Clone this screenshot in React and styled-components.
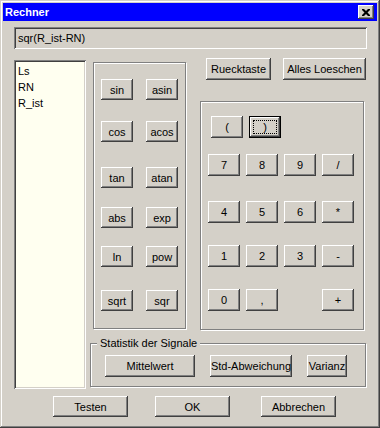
import React from 'react';
import styled, { createGlobalStyle } from 'styled-components';

const face = '#d4d0c8';

const GlobalStyle = createGlobalStyle`
    html, body {
        margin: 0;
        padding: 0;
        background: ${face};
    }
    body {
        font-family: "Liberation Sans", Arial, sans-serif;
        font-size: 11px;
        color: #000;
    }
`;

const raised = `
    inset -1px -1px #404040,
    inset 1px 1px #ffffff,
    inset -2px -2px #808080,
    inset 2px 2px ${face}
`;

const sunken = `
    inset 1px 1px #808080,
    inset -1px -1px #ffffff,
    inset 2px 2px #404040,
    inset -2px -2px ${face}
`;

const Window = styled.div`
    width: 380px;
    height: 428px;
    box-sizing: border-box;
    padding: 3px;
    background: ${face};
    box-shadow: inset -1px -1px #404040, inset 1px 1px ${face}, inset -2px -2px #808080, inset 2px 2px #ffffff;
    display: flex;
    flex-direction: column;
`;

const TitleBar = styled.div`
    height: 18px;
    background: #0000ff;
    display: flex;
    align-items: center;
    justify-content: space-between;
    padding: 0 3px 0 2px;
`;

const Title = styled.span`
    color: #fff;
    font-weight: bold;
    font-size: 11px;
`;

const CloseButton = styled.div`
    width: 16px;
    height: 14px;
    background: ${face};
    box-shadow: ${raised};
    display: flex;
    align-items: center;
    justify-content: center;
`;

const Body = styled.div`
    padding: 6px 10px 0 11px;
    display: flex;
    flex-direction: column;
`;

const ExprField = styled.div`
    height: 22px;
    box-sizing: border-box;
    padding: 0 4px;
    display: flex;
    align-items: center;
    box-shadow: ${sunken};
`;

const MainRow = styled.div`
    display: flex;
    align-items: flex-start;
    margin-top: 9px;
`;

const SignalList = styled.ul`
    list-style: none;
    margin: 2px 0 0;
    padding: 3px 4px;
    width: 72px;
    height: 329px;
    box-sizing: border-box;
    background: #fffff0;
    box-shadow: ${sunken};
`;

const ListItem = styled.li`
    line-height: 16px;
    height: 16px;
`;

const RightArea = styled.div`
    margin-left: 4px;
    width: 276px;
    display: flex;
    flex-direction: column;
`;

const TopRow = styled.div`
    display: flex;
    align-items: flex-start;
`;

const Group = styled.div`
    position: relative;
    box-sizing: border-box;
    border: 1px solid #808080;
    box-shadow: inset 1px 1px #ffffff, 1px 1px #ffffff;
`;

const FuncGroup = styled(Group)`
    margin: 4px 0 0 3px;
    width: 94px;
    height: 267px;
    padding: 16px 0 0 7px;
    display: flex;
    flex-direction: column;
`;

const FuncRow = styled.div`
    display: flex;
    gap: 13px;
    margin-top: ${p => p.$mt || 0}px;
`;

const Button = styled.button`
    position: relative;
    width: ${p => p.$w || 32}px;
    height: ${p => p.$h || 22}px;
    padding: 0;
    border: none;
    background: ${face};
    font-family: inherit;
    font-size: 11px;
    color: #000;
    box-shadow: ${raised};
    display: flex;
    align-items: center;
    justify-content: center;
    white-space: nowrap;
    flex: none;
`;

const DefaultButton = styled(Button)`
    box-shadow:
        inset 0 0 0 1px #000000,
        inset -2px -2px #404040,
        inset 2px 2px #ffffff,
        inset -3px -3px #808080,
        inset 3px 3px ${face};
    &::after {
        content: '';
        position: absolute;
        inset: 4px;
        border: 1px dotted #000;
    }
`;

const RightCol = styled.div`
    margin-left: 14px;
    width: 166px;
    display: flex;
    flex-direction: column;
`;

const EditRow = styled.div`
    display: flex;
    gap: 12px;
    padding-left: 6px;
`;

const KeyGroup = styled(Group)`
    margin-top: 21px;
    width: 164px;
    height: 229px;
    padding: 14px 0 0 7px;
    display: flex;
    flex-direction: column;
`;

const KeyRow = styled.div`
    display: grid;
    grid-template-columns: repeat(4, 32px);
    column-gap: 6px;
    margin-top: ${p => p.$mt || 0}px;
    padding-left: ${p => p.$pl || 0}px;
`;

const StatGroup = styled(Group)`
    margin-top: 13px;
    height: 44px;
    padding: 11px 0 0 14px;
    display: flex;
    gap: 15px;
`;

const Legend = styled.span`
    position: absolute;
    top: -7px;
    left: 6px;
    padding: 0 3px;
    background: ${face};
    line-height: 13px;
`;

const Footer = styled.div`
    display: flex;
    margin-top: 7px;
    padding-left: 39px;
`;

const FooterButton = styled(Button)`
    margin-left: ${p => p.$ml || 0}px;
`;

const CloseIcon = () => (
    <svg width="8" height="7" viewBox="0 0 8 7">
        <path d="M0 0h2l2 2 2-2h2v1L5.5 3.5 8 6v1H6L4 5 2 7H0V6l2.5-2.5L0 1z" fill="#000" />
    </svg>
);

const funcRows = [
    { mt: 0, keys: ['sin', 'asin'] },
    { mt: 21, keys: ['cos', 'acos'] },
    { mt: 25, keys: ['tan', 'atan'] },
    { mt: 19, keys: ['abs', 'exp'] },
    { mt: 18, keys: ['ln', 'pow'] },
    { mt: 23, keys: ['sqrt', 'sqr'] },
];

const keyRows = [
    { mt: 16, keys: ['7', '8', '9', '/'] },
    { mt: 25, keys: ['4', '5', '6', '*'] },
    { mt: 22, keys: ['1', '2', '3', '-'] },
    { mt: 22, keys: ['0', ',', null, '+'] },
];

const signals = ['Ls', 'RN', 'R_ist'];

export default function App() {
    return (
        <>
            <GlobalStyle />
            <Window>
                <TitleBar>
                    <Title>Rechner</Title>
                    <CloseButton>
                        <CloseIcon />
                    </CloseButton>
                </TitleBar>
                <Body>
                    <ExprField>sqr(R_ist-RN)</ExprField>
                    <MainRow>
                        <SignalList>
                            {signals.map(s => (
                                <ListItem key={s}>{s}</ListItem>
                            ))}
                        </SignalList>
                        <RightArea>
                            <TopRow>
                                <FuncGroup>
                                    {funcRows.map(row => (
                                        <FuncRow key={row.keys[0]} $mt={row.mt}>
                                            {row.keys.map(k => (
                                                <Button key={k} $h={21}>
                                                    {k}
                                                </Button>
                                            ))}
                                        </FuncRow>
                                    ))}
                                </FuncGroup>
                                <RightCol>
                                    <EditRow>
                                        <Button $w={65}>Ruecktaste</Button>
                                        <Button $w={83}>Alles Loeschen</Button>
                                    </EditRow>
                                    <KeyGroup>
                                        <KeyRow $pl={3}>
                                            <Button>(</Button>
                                            <DefaultButton>)</DefaultButton>
                                        </KeyRow>
                                        {keyRows.map(row => (
                                            <KeyRow key={row.keys[0]} $mt={row.mt}>
                                                {row.keys.map((k, i) =>
                                                    k ? <Button key={k}>{k}</Button> : <span key={`gap${i}`} />
                                                )}
                                            </KeyRow>
                                        ))}
                                    </KeyGroup>
                                </RightCol>
                            </TopRow>
                            <StatGroup>
                                <Legend>Statistik der Signale</Legend>
                                <Button $w={90}>Mittelwert</Button>
                                <Button $w={82}>Std-Abweichung</Button>
                                <Button $w={40}>Varianz</Button>
                            </StatGroup>
                        </RightArea>
                    </MainRow>
                    <Footer>
                        <FooterButton $w={75} $h={21}>Testen</FooterButton>
                        <FooterButton $w={75} $h={21} $ml={27}>OK</FooterButton>
                        <FooterButton $w={75} $h={21} $ml={31}>Abbrechen</FooterButton>
                    </Footer>
                </Body>
            </Window>
        </>
    );
}
